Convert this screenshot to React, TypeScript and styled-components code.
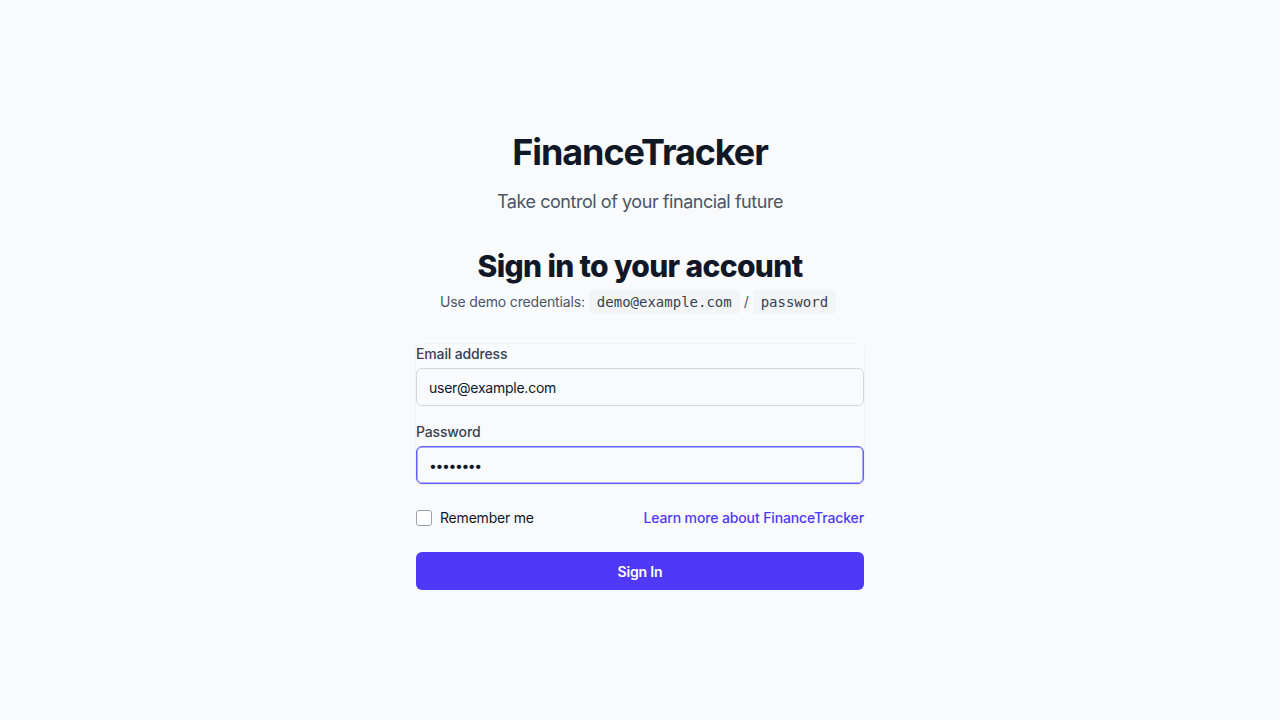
import React from "react";
import styled, { createGlobalStyle } from "styled-components";

const GlobalStyle = createGlobalStyle`
  * { box-sizing: border-box; }
  html, body { margin: 0; padding: 0; background: #f9fafb; }
  body { font-family: Inter, "Noto Sans", "Liberation Sans", sans-serif; color: #101828; }
`;

const Page = styled.main`
  min-height: 720px;
  display: flex;
  align-items: center;
  justify-content: center;
  padding: 2px 16px 0;
`;

const Container = styled.div`
  width: 448px;
  display: flex;
  flex-direction: column;
`;

const Brand = styled.header`
  text-align: center;
`;

const BrandTitle = styled.h1`
  margin: 0;
  font-size: 36px;
  line-height: 40px;
  font-weight: 700;
  color: #101828;
  letter-spacing: -1.1px;
`;

const Tagline = styled.p`
  margin: 16px 0 0;
  font-size: 18px;
  line-height: 28px;
  color: #4a5565;
  letter-spacing: -0.45px;
`;

const Intro = styled.div`
  margin-top: 32px;
  text-align: center;
`;

const Heading = styled.h2`
  margin: 0;
  font-size: 30px;
  line-height: 36px;
  font-weight: 800;
  color: #101828;
  letter-spacing: -0.65px;
`;

const Hint = styled.p`
  margin: 8px 0 0;
  height: 20px;
  font-size: 14px;
  line-height: 20px;
  color: #4a5565;
  letter-spacing: -0.15px;
`;

const Code = styled.code`
  font-family: "DejaVu Sans Mono", "Liberation Mono", monospace;
  font-size: 14px;
  line-height: 1;
  letter-spacing: 0;
  background: #f3f4f6;
  color: #364153;
  border-radius: 4px;
  padding: 4px 8px;
  margin: 0 4px;
`;

const Form = styled.form`
  margin-top: 32px;
  display: flex;
  flex-direction: column;
  gap: 24px;
`;

const Fields = styled.div`
  display: flex;
  flex-direction: column;
  gap: 16px;
  border-radius: 6px;
  box-shadow: 0 1px 3px 0 rgba(0, 0, 0, 0.06), 0 0 0 1px rgba(0, 0, 0, 0.015);
`;

const Field = styled.div`
  display: flex;
  flex-direction: column;
  gap: 4px;
`;

const Label = styled.label`
  font-size: 14px;
  line-height: 20px;
  font-weight: 500;
  color: #364153;
  letter-spacing: -0.15px;
`;

const Input = styled.input<{ $focused?: boolean }>`
  width: 100%;
  height: 38px;
  padding: 8px 12px;
  font-family: Inter, "Noto Sans", sans-serif;
  font-size: 14px;
  line-height: 20px;
  letter-spacing: ${(p) => (p.$focused ? "-1.4px" : "-0.25px")};
  color: #101828;
  background: #f9fafb;
  border: 1px solid ${(p) => (p.$focused ? "#615fff" : "#d1d5dc")};
  border-radius: 6px;
  outline: none;
  box-shadow: ${(p) => (p.$focused ? "inset 0 0 0 0.5px #615fff" : "none")};
`;

const Row = styled.div`
  display: flex;
  align-items: center;
  justify-content: space-between;
  height: 20px;
`;

const CheckLabel = styled.label`
  display: flex;
  align-items: center;
  gap: 8px;
  font-size: 14px;
  line-height: 20px;
  color: #101828;
  letter-spacing: -0.2px;
`;

const Box = styled.span`
  width: 16px;
  height: 16px;
  border: 1px solid #99a1af;
  border-radius: 3px;
  background: #fff;
`;

const Link = styled.a`
  font-size: 14px;
  line-height: 20px;
  font-weight: 500;
  color: #4f39f6;
  text-decoration: none;
  letter-spacing: -0.13px;
`;

const Button = styled.button`
  height: 38px;
  width: 100%;
  border: none;
  border-radius: 6px;
  background: #4f39f6;
  color: #fff;
  font-family: Inter, "Noto Sans", sans-serif;
  font-size: 14px;
  font-weight: 600;
  letter-spacing: -0.15px;
  cursor: pointer;
`;

export default function App() {
  return (
    <>
      <GlobalStyle />
      <Page>
        <Container>
          <Brand>
            <BrandTitle>FinanceTracker</BrandTitle>
            <Tagline>Take control of your financial future</Tagline>
          </Brand>
          <Intro>
            <Heading>Sign in to your account</Heading>
            <Hint>
              Use demo credentials:
              <Code>demo@example.com</Code>/<Code>password</Code>
            </Hint>
          </Intro>
          <Form onSubmit={(e) => e.preventDefault()}>
            <Fields>
              <Field>
                <Label htmlFor="email">Email address</Label>
                <Input id="email" type="email" defaultValue="user@example.com" />
              </Field>
              <Field>
                <Label htmlFor="password">Password</Label>
                <Input id="password" type="password" defaultValue="password" $focused />
              </Field>
            </Fields>
            <Row>
              <CheckLabel>
                <Box />
                Remember me
              </CheckLabel>
              <Link href="#">Learn more about FinanceTracker</Link>
            </Row>
            <Button type="submit">Sign In</Button>
          </Form>
        </Container>
      </Page>
    </>
  );
}
